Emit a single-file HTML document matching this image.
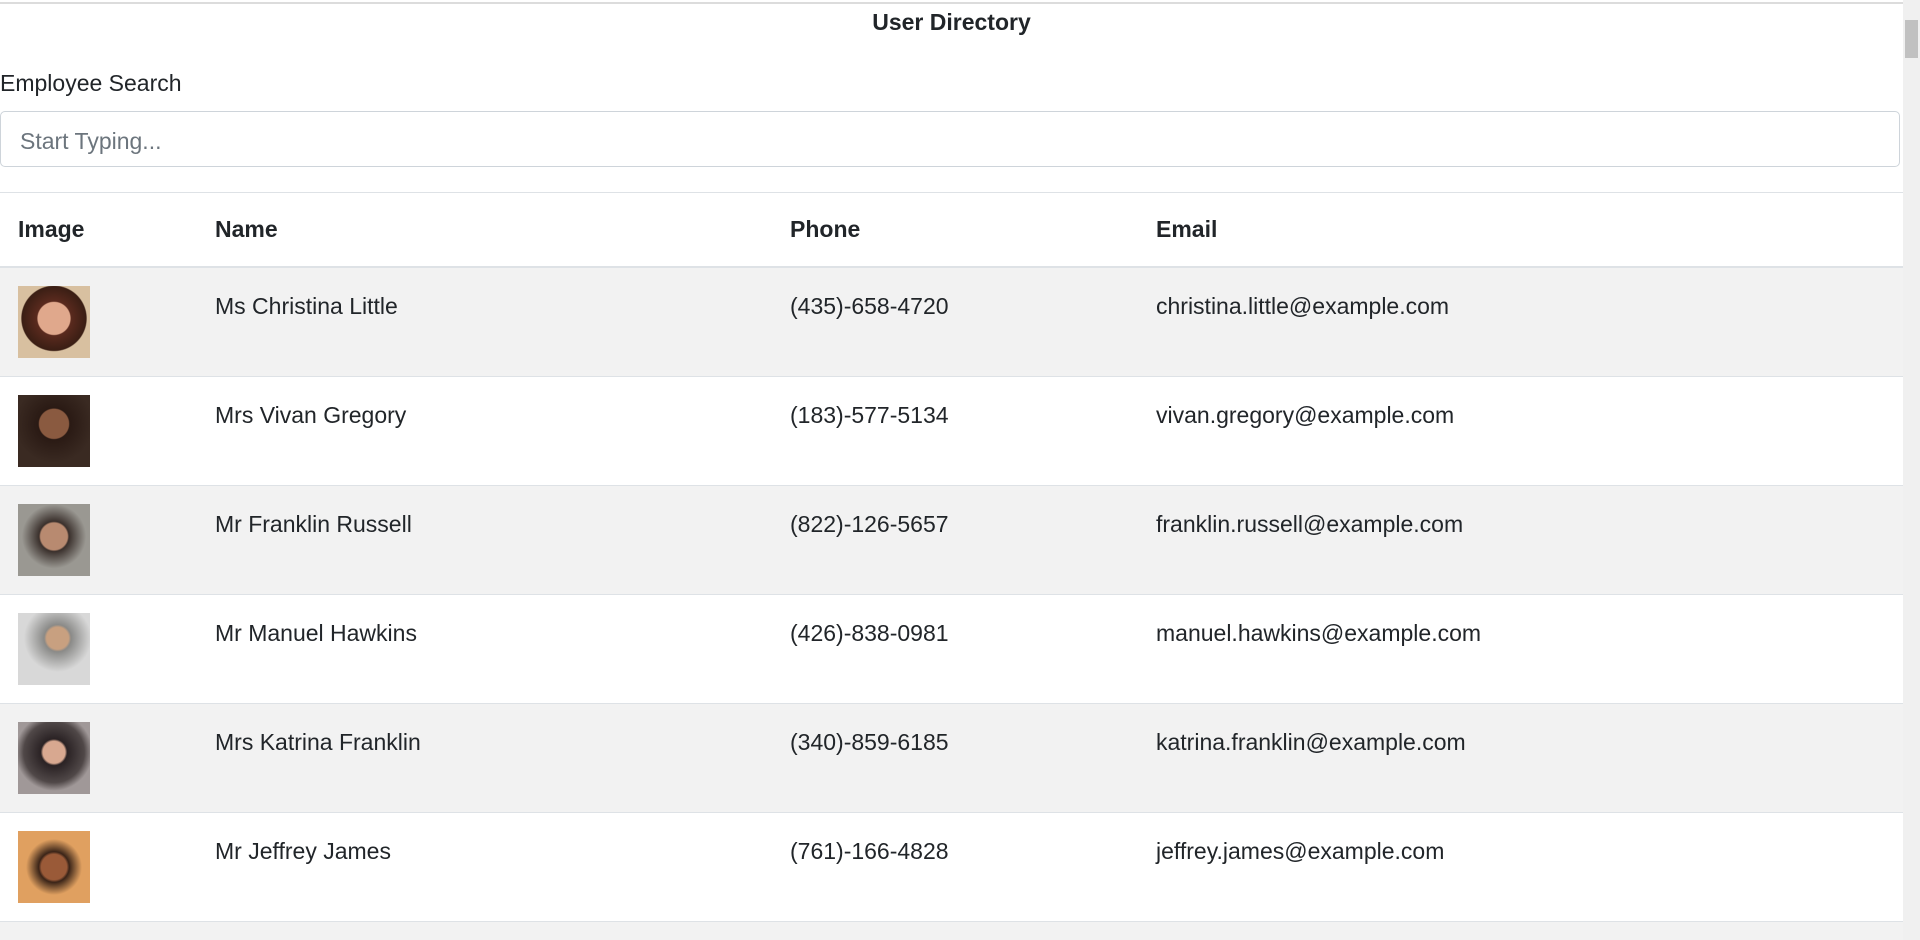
<!DOCTYPE html>
<html><head><meta charset="utf-8"><style>
html,body{margin:0;padding:0;background:#fff;width:1920px;height:940px;overflow:hidden;}
body{position:relative;font-family:"Liberation Sans",sans-serif;color:#212529;}
.topline{position:absolute;left:0;top:2px;width:1903px;height:2px;background:#dcdcdc;}
h1{position:absolute;top:7px;left:0;width:1903px;text-align:center;font-size:23px;font-weight:bold;margin:0;line-height:30px;}
.label{position:absolute;left:0;top:68px;font-size:23px;line-height:30px;}
.input{position:absolute;left:0;top:111px;width:1900px;height:56px;border:1px solid #ced4da;border-radius:5px;box-sizing:border-box;font-size:23px;color:#6c757d;padding-left:19px;line-height:58px;}
.tline{position:absolute;left:0;top:192px;width:1903px;height:1px;background:#dee2e6;}
.head{position:absolute;top:193px;left:0;width:1903px;height:73px;border-bottom:3px solid #dee2e6;font-weight:bold;font-size:23px;}
.head span,.row span{position:absolute;}
.head span{top:23px;}
.row{position:absolute;left:0;width:1903px;height:108px;border-bottom:1px solid #dee2e6;font-size:23px;}
.row span{top:25px;}
.g{background:#f2f2f2;}
.c1{left:18px}.c2{left:215px}.c3{left:790px}.c4{left:1156px}
.img{position:absolute;left:18px;top:18px;width:72px;height:72px;}
.sb{position:absolute;right:0;top:0;width:17px;height:940px;background:#f0f0f0;}
.thumb{position:absolute;right:2px;top:20px;width:13px;height:38px;background:#c1c1c1;}
</style></head><body>
<div class="topline"></div>
<h1>User Directory</h1>
<div class="label">Employee Search</div>
<div class="input">Start Typing...</div>
<div class="tline"></div>
<div class="head"><span class="c1">Image</span><span class="c2">Name</span><span class="c3">Phone</span><span class="c4">Email</span></div>

<div class="row g" style="top:268px"><div class="img" style="background:radial-gradient(circle at 50% 45%,#e0a88c 0 30%,#5a2a1e 32%,#3a1e14 60%,#d8c0a0 62%)"></div><span class="c2">Ms Christina Little</span><span class="c3">(435)-658-4720</span><span class="c4">christina.little@example.com</span></div>
<div class="row" style="top:377px"><div class="img" style="background:radial-gradient(circle at 50% 40%,#8a5a40 0 26%,#2a1a14 28%,#3a2a22 70%)"></div><span class="c2">Mrs Vivan Gregory</span><span class="c3">(183)-577-5134</span><span class="c4">vivan.gregory@example.com</span></div>
<div class="row g" style="top:486px"><div class="img" style="background:radial-gradient(circle at 50% 45%,#b88a70 0 25%,#3a302c 28%,#9a9892 60%)"></div><span class="c2">Mr Franklin Russell</span><span class="c3">(822)-126-5657</span><span class="c4">franklin.russell@example.com</span></div>
<div class="row" style="top:595px"><div class="img" style="background:radial-gradient(circle at 55% 35%,#c8a080 0 18%,#8a8a88 22%,#d8d8d8 55%)"></div><span class="c2">Mr Manuel Hawkins</span><span class="c3">(426)-838-0981</span><span class="c4">manuel.hawkins@example.com</span></div>
<div class="row g" style="top:704px"><div class="img" style="background:radial-gradient(circle at 50% 42%,#d8a890 0 20%,#2a2224 24%,#504848 55%,#a09898 70%)"></div><span class="c2">Mrs Katrina Franklin</span><span class="c3">(340)-859-6185</span><span class="c4">katrina.franklin@example.com</span></div>
<div class="row" style="top:813px"><div class="img" style="background:radial-gradient(circle at 50% 50%,#9a5a38 0 25%,#3a2418 30%,#e0a060 55%)"></div><span class="c2">Mr Jeffrey James</span><span class="c3">(761)-166-4828</span><span class="c4">jeffrey.james@example.com</span></div>
<div style="position:absolute;top:922px;left:0;width:1903px;height:18px;background:#f2f2f2"></div>

<div class="sb"><div class="thumb"></div></div>
</body></html>
